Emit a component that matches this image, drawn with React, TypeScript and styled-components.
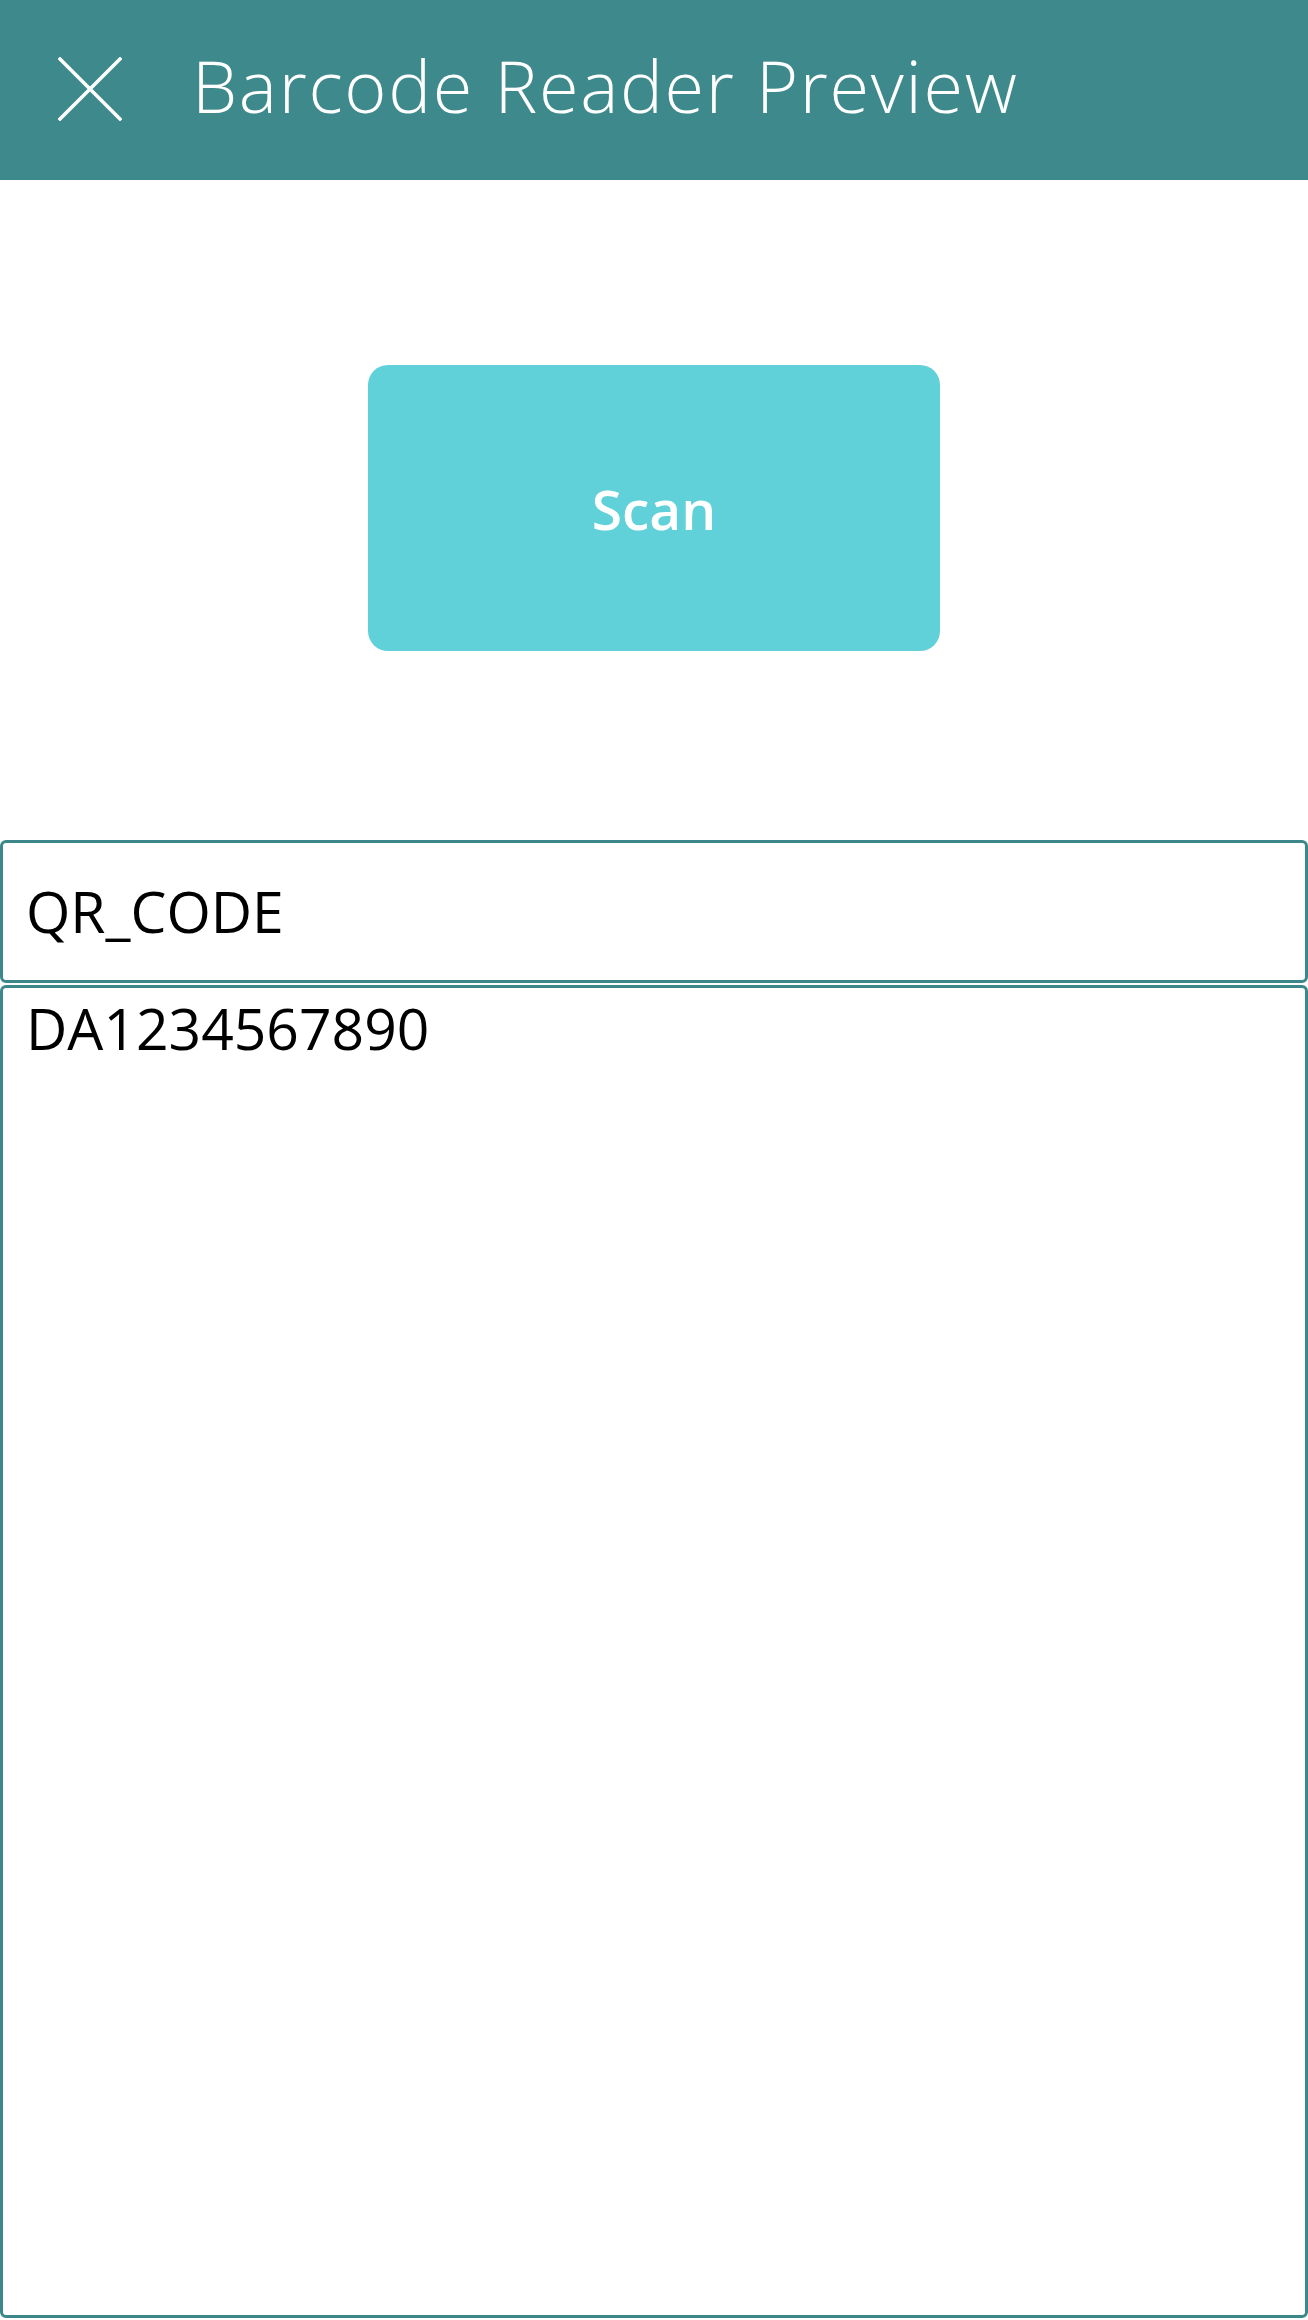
import React from "react";
import styled, { createGlobalStyle } from "styled-components";

const GlobalStyle = createGlobalStyle`
  html, body {
    margin: 0;
    padding: 0;
    background: #ffffff;
  }
  body {
    font-family: "Open Sans", "Noto Sans", sans-serif;
  }
  * { box-sizing: border-box; }
`;

const Screen = styled.div`
  width: 1308px;
  height: 2320px;
  display: flex;
  flex-direction: column;
  background: #ffffff;
`;

const Header = styled.header`
  height: 180px;
  flex: 0 0 180px;
  background: #3e898c;
  display: flex;
  align-items: center;
  padding-left: 58px;
`;

const CloseButton = styled.button`
  width: 64px;
  height: 64px;
  padding: 0;
  border: none;
  background: transparent;
  display: flex;
  align-items: center;
  justify-content: center;
  margin-top: -3px;
`;

const Title = styled.h1`
  margin: -10px 0 0 70px;
  font-family: "Open Sans", sans-serif;
  font-weight: 300;
  font-size: 72px;
  letter-spacing: 1.7px;
  color: #ffffff;
  line-height: 1;
`;

const ButtonArea = styled.div`
  height: 660px;
  flex: 0 0 660px;
  display: flex;
  align-items: center;
  justify-content: center;
`;

const ScanButton = styled.button`
  width: 572px;
  height: 286px;
  border: none;
  border-radius: 20px;
  background: #61d1d9;
  color: #ffffff;
  font-family: "Open Sans", sans-serif;
  font-weight: 600;
  font-size: 55px;
  display: flex;
  align-items: center;
  justify-content: center;
  padding: 0;
  margin-top: -4px;
`;

const Fields = styled.div`
  flex: 1;
  display: flex;
  flex-direction: column;
  gap: 2px;
  padding-bottom: 2px;
`;

const Field = styled.div<{ $grow?: boolean }>`
  border: 3px solid #3b878a;
  border-radius: 6px;
  padding: ${(p) => (p.$grow ? "2px 23px" : "0 23px")};
  font-family: "Open Sans", sans-serif;
  font-size: 57px;
  color: #000000;
  display: flex;
  align-items: ${(p) => (p.$grow ? "flex-start" : "center")};
  height: ${(p) => (p.$grow ? "auto" : "143px")};
  flex: ${(p) => (p.$grow ? "1" : "0 0 143px")};
  line-height: 1.36;
`;

function CloseIcon() {
  return (
    <svg width="64" height="64" viewBox="0 0 64 64" fill="none">
      <path d="M2 2 L62 62 M62 2 L2 62" stroke="#ffffff" strokeWidth="3.5" strokeLinecap="square" />
    </svg>
  );
}

export default function App() {
  return (
    <>
      <GlobalStyle />
      <Screen>
        <Header>
          <CloseButton aria-label="Close">
            <CloseIcon />
          </CloseButton>
          <Title>Barcode Reader Preview</Title>
        </Header>
        <ButtonArea>
          <ScanButton>Scan</ScanButton>
        </ButtonArea>
        <Fields>
          <Field>QR_CODE</Field>
          <Field $grow>DA1234567890</Field>
        </Fields>
      </Screen>
    </>
  );
}
